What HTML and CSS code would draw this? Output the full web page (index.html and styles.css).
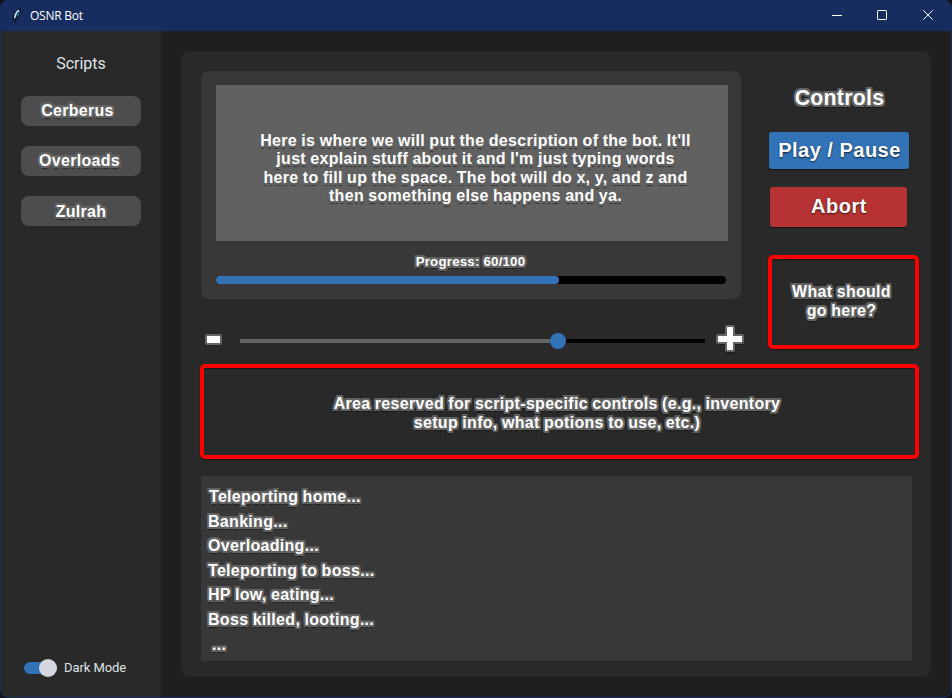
FILE: index.html
```html
<!DOCTYPE html>
<html lang="en">
<head>
<meta charset="utf-8">
<title>OSNR Bot</title>
<link rel="stylesheet" href="styles.css">
</head>
<body>
<div class="window">
  <header class="titlebar">
    <svg class="feather" width="12" height="18" viewBox="0 0 12 18"><path d="M3 13C2 8.500 4.500 4 9 1.500C10 6.500 7.500 11 3 13Z" fill="#55a4e8" stroke="#080c14" stroke-width="1.200"/><path d="M7.500 3C4.800 5.500 3.800 8.500 3.800 11.500" stroke="#e8f5ff" stroke-width="1.100" fill="none"/><path d="M7.500 5L4.300 12.500L4 16" stroke="#080c14" stroke-width="1" fill="none"/></svg>
    <span class="title">OSNR Bot</span>
    <svg class="winbtns" width="104" height="12" viewBox="0 0 104 12" fill="none" stroke="#fff"><path d="M1 6.500H11"/><rect x="46.500" y="1.500" width="9" height="9" rx=".6"/><path d="M92.300 1.300L101.700 10.700M101.700 1.300L92.300 10.700"/></svg>
  </header>
  <div class="body">
    <aside class="sidebar">
      <h2 class="side-title">Scripts</h2>
      <button class="script cerberus"><span class="outlined">Cerberus</span></button>
      <button class="script overloads"><span class="outlined">Overloads</span></button>
      <button class="script zulrah"><span class="outlined">Zulrah</span></button>
      <label class="mode"><span class="switch"><span class="knob"></span></span><span class="mode-text">Dark Mode</span></label>
    </aside>
    <main class="panel">
      <div class="top">
        <div class="left">
          <section class="card">
            <div class="desc"><p class="outlined">Here is where we will put the description of the bot. It'll<br>just explain stuff about it and I'm just typing words<br>here to fill up the space. The bot will do x, y, and z and<br>then something else happens and ya.</p></div>
            <div class="progress-label outlined">Progress: 60/100</div>
            <div class="progress"><div class="progress-fill"></div></div>
          </section>
          <div class="slider-row">
            <svg class="minus" width="19" height="14" viewBox="0 0 19 14"><rect x="1" y="2" width="17" height="11" rx="2" fill="#1a1a1a" opacity=".6"/><rect x="1" y="1" width="17" height="11" rx="2" fill="#656565"/><rect x="3" y="3" width="13" height="7" fill="#fff"/></svg>
            <div class="track"><div class="track-fill"></div><div class="thumb"></div></div>
            <svg class="plus" width="28" height="30" viewBox="0 0 28 30"><path d="M11 4H17V13H26V19H17V28H11V19H2V13H11Z" fill="#1a1a1a" stroke="#1a1a1a" stroke-width="4" stroke-linejoin="round" opacity=".6"/><path d="M11 3H17V12H26V18H17V26H11V18H2V12H11Z" fill="#fff" stroke="#656565" stroke-width="4" stroke-linejoin="round" paint-order="stroke"/></svg>
          </div>
        </div>
        <section class="controls">
          <h2 class="controls-title outlined">Controls</h2>
          <button class="action play">Play / Pause</button>
          <button class="action abort">Abort</button>
          <div class="box todo"><p class="outlined">What should<br>go here?</p></div>
        </section>
      </div>
      <div class="box reserved"><p class="outlined">Area reserved for script-specific controls (e.g., inventory<br>setup info, what potions to use, etc.)</p></div>
      <div class="log">
        <p class="outlined l1">Teleporting home...</p>
        <p class="outlined">Banking...</p>
        <p class="outlined">Overloading...</p>
        <p class="outlined">Teleporting to boss...</p>
        <p class="outlined">HP low, eating...</p>
        <p class="outlined">Boss killed, looting...</p>
        <p class="outlined last">...</p>
      </div>
    </main>
  </div>
</div>
</body>
</html>
```
FILE: styles.css
```css
* { box-sizing: border-box; margin: 0; padding: 0; }
body { background: #101217; width: 952px; height: 698px; overflow: hidden; font-family: Roboto, sans-serif; }
button { border: 0; }
.window { width: 952px; height: 698px; border: 1px solid #172c5f; border-top: 0; border-radius: 8px; overflow: hidden; background: #1f1f1f; }
.titlebar { height: 31px; background: #172c5f; display: flex; align-items: center; padding: 0 16px 0 10px; color: #fff; }
.title { font: 12px "Open Sans", sans-serif; margin-left: 7px; letter-spacing: -.25px; }
.winbtns { margin-left: auto; margin-top: -1px; }
.body { display: flex; height: 666px; }
.sidebar { width: 160px; background: #292929; padding: 20px; display: flex; flex-direction: column; gap: 20px; }
.side-title { font-size: 16px; font-weight: 400; line-height: 25px; color: #dfe2e7; text-align: center; }
.script { height: 30px; border-radius: 8px; background: #4d4d4d; display: flex; justify-content: center; padding-top: 1px; align-items: center; }
.script .outlined { letter-spacing: .3px; }
.cerberus { padding-right: 7px; padding-top: 0; }
.overloads { padding-right: 3px; }
.zulrah { padding-top: 2px; }
.outlined {
  font: bold 16px/18.400px "Liberation Sans", Arial, sans-serif; letter-spacing: .3px; word-spacing: -.4px; color: #fff; white-space: nowrap;
  text-shadow:
    2px 0 #636363, -2px 0 #636363, 0 2px #636363, 0 -2px #636363,
    1.700px 1.700px #636363, -1.700px 1.700px #636363, 1.700px -1.700px #636363, -1.700px -1.700px #636363,
    1px 0 #636363, -1px 0 #636363,
    0 3px 1px rgba(0,0,0,.5), 1.400px 2.400px 1px rgba(0,0,0,.3), -1.400px 2.400px 1px rgba(0,0,0,.3);
}
.mode { margin-top: auto; margin-left: 3px; margin-bottom: -1px; display: flex; align-items: center; font-size: 13px; letter-spacing: -.08px; color: #dfe2e7; height: 20px; }
.mode-text { padding-bottom: 2px; }
.switch { width: 33px; height: 12px; margin-right: 7px; border-radius: 6px; background: #3273b8; display: flex; align-items: center; justify-content: flex-end; }
.knob { width: 18px; height: 18px; border-radius: 50%; background: #d5d8de; flex: none; }
.panel { width: 750px; height: 626px; margin: 20px; padding: 20px 12px 16px 19px; background: #292929; border-radius: 8px; }
.top { display: flex; height: 293px; padding-left: 1px; justify-content: space-between; }
.left { width: 545px; }
.card { width: 540px; height: 228px; background: #383838; border-radius: 8px; padding: 14px 13px 15px 15px; display: flex; flex-direction: column; }
.desc { height: 156px; background: #616161; display: flex; justify-content: center; align-items: center; padding: 12px 0 0 7px; text-align: center; }
.progress-label { font-size: 13.300px; text-align: center; padding-right: 3px; margin-top: 12px; letter-spacing: .2px; word-spacing: 0; }
.progress { width: 510px; height: 8px; border-radius: 4px; background: #000; margin-top: 5px; overflow: hidden; }
.progress-fill { width: 343px; height: 8px; border-radius: 2px 4px 4px 2px; background: #3273b8; }
.slider-row { display: flex; height: 65px; padding-left: 3px; }
.minus { margin-top: 34px; }
.track { width: 465px; height: 4px; background: #000; margin: 40px 11px 0 17px; display: flex; align-items: center; flex: none; }
.track-fill { width: 310px; height: 4px; background: #656565; }
.thumb { width: 16px; height: 16px; border-radius: 50%; background: #3273b8; }
.plus { margin-top: 25px; flex: none; overflow: visible; }
.controls { width: 151px; display: flex; flex-direction: column; }
.controls-title { font-size: 21.300px; line-height: 24px; height: 61px; padding: 15px 8px 0 0; text-align: center; letter-spacing: .25px; }
.action { color: #fff; font: bold 20px/24px "Liberation Sans", Arial, sans-serif; letter-spacing: .5px; text-shadow: 0 1px 2px rgba(0,0,0,.7); border-radius: 3px; box-shadow: 0 1px 1px #151515; }
.play { width: 140px; height: 37px; margin-left: 1px; background: #3273b8; padding-bottom: 2px; padding-left: 1px; }
.abort { width: 137px; height: 40px; margin: 18px 0 28px 2px; background: #b73333; padding-bottom: 2px; padding-left: 1px; }
.box { border: 4px solid #f00; border-radius: 5px; box-shadow: 0 1px 1px #151515, inset 0 1px 1px #151515; text-align: center; display: flex; justify-content: center; align-items: center; }
.todo { width: 151px; height: 94px; padding: 0 4px 1px 0; }
.reserved { height: 95px; padding: 4px 5px 0 0; }
.log { width: 711px; height: 185px; margin: 17px 0 0 1px; padding: 12px 7px 0; background: #383838; }
.log p { height: 24.600px; }
.log .l1 { padding-left: 1px; }
.log .last { padding-left: 4px; }
```
